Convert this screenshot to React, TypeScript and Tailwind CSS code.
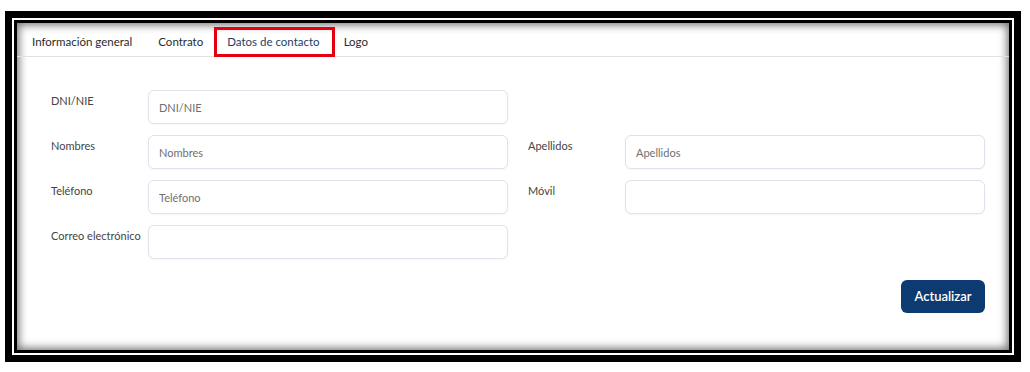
import React from 'react';

type Field = { label: string; placeholder?: string } | null;

const rows: [Field, Field][] = [
  [{ label: 'DNI/NIE', placeholder: 'DNI/NIE' }, null],
  [{ label: 'Nombres', placeholder: 'Nombres' }, { label: 'Apellidos', placeholder: 'Apellidos' }],
  [{ label: 'Teléfono', placeholder: 'Teléfono' }, { label: 'Móvil' }],
  [{ label: 'Correo electrónico' }, null],
];

const tabs = ['Información general', 'Contrato', 'Datos de contacto', 'Logo'];

function FormField({ field }: { field: Field }) {
  if (!field) return <div />;
  return (
    <div className="flex items-start">
      <label className="w-[97px] shrink-0 whitespace-nowrap pt-[3px] text-[11px] leading-[16px] text-[#444]">
        {field.label}
      </label>
      <input
        type="text"
        placeholder={field.placeholder}
        className="h-[34px] w-[360px] rounded-[6px] border border-[#dde3ec] bg-white px-[10px] text-[11px] text-[#333] shadow-[0_1px_2px_rgba(0,0,0,0.04)] outline-none placeholder:text-[#6f6f6f]"
      />
    </div>
  );
}

export default function App() {
  const active = 'Datos de contacto';

  return (
    <div className="min-h-[372px] bg-white pl-[5px] pt-[11px] font-['Lato',sans-serif]">
      <div className="h-[351px] w-[1016px] bg-black p-[7px]">
        <div className="h-full bg-white p-[2px]">
          <div className="h-full bg-black p-[3px]">
            <div className="flex h-full flex-col bg-white shadow-[inset_0_0_9px_2px_rgba(0,0,0,0.55)]">
              {/* Tabs */}
              <div className="flex h-[34px] shrink-0 items-end border-b border-[#e2e2e2] px-[2px]">
                {tabs.map((tab) => (
                  <div
                    key={tab}
                    className={`-mb-px flex h-[30px] items-center text-[11.5px] ${
                      tab === active
                        ? '-ml-[2px] mr-[-4px] border-[3px] border-[#e4000f] pl-[10px] pr-[12px] text-[#1f3d66]'
                        : 'px-[13px] text-[#2a2a2a]'
                    }`}
                  >
                    {tab}
                  </div>
                ))}
              </div>

              {/* Form */}
              <div className="flex flex-col pl-[34px] pt-[33px]">
                <div className="grid grid-cols-[457px_457px] gap-x-[20px] gap-y-[11px]">
                  {rows.map(([left, right], i) => (
                    <React.Fragment key={i}>
                      <FormField field={left} />
                      <FormField field={right} />
                    </React.Fragment>
                  ))}
                </div>
                <div className="mt-[21px] flex w-[934px] justify-end">
                  <button className="h-[33px] w-[84px] rounded-[6px] bg-[#0c3a71] text-[13px] font-semibold text-white">
                    Actualizar
                  </button>
                </div>
              </div>
            </div>
          </div>
        </div>
      </div>
    </div>
  );
}
